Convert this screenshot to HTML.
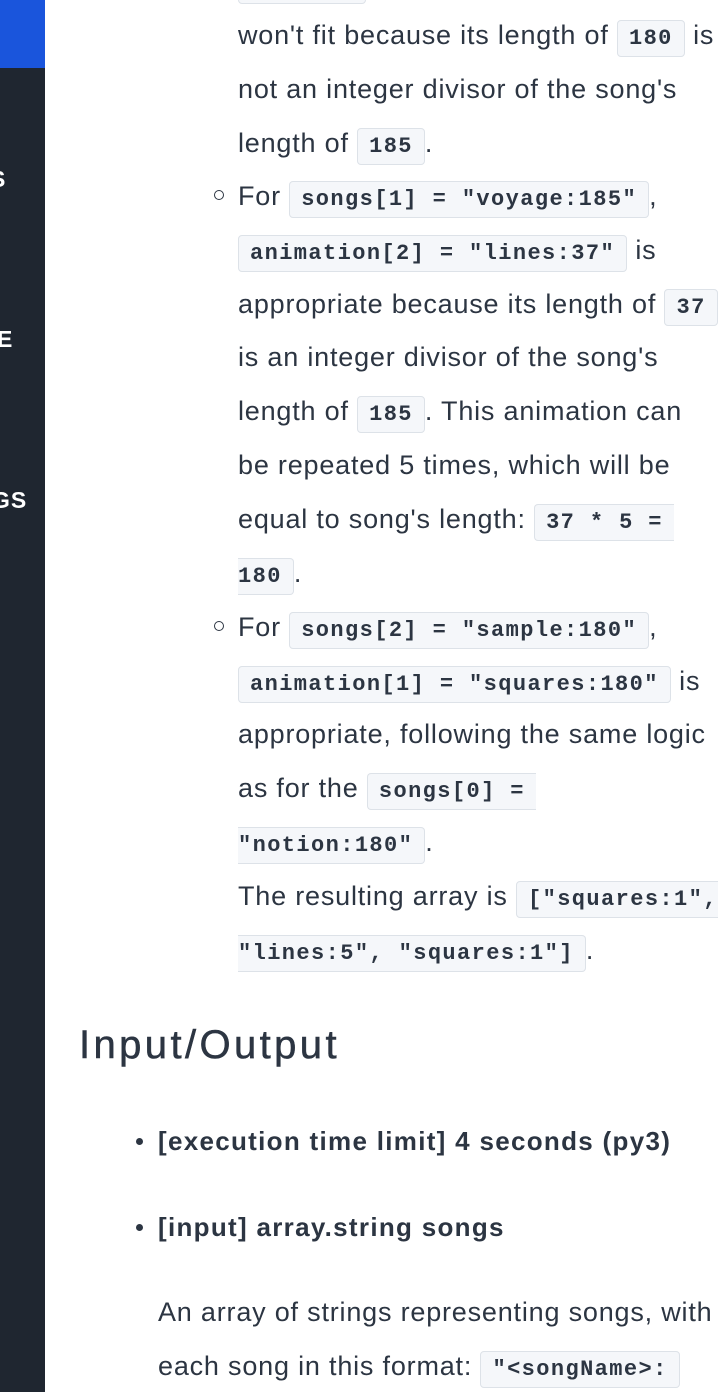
<!DOCTYPE html>
<html><head><meta charset="utf-8"><style>
body{margin:0;width:718px;height:1392px;overflow:hidden;background:#fff;position:relative;font-family:"Liberation Sans",sans-serif;color:#2c3542}
.sb{position:absolute;left:0;top:0;width:45px;height:1392px;background:#1f2630}
.sb .blue{position:absolute;left:0;top:0;width:45px;height:68px;background:#1a55dc}
.sb span{position:absolute;color:#fff;font:700 23px "Liberation Sans",sans-serif;letter-spacing:1px}
.l{position:absolute;left:238px;height:54px;line-height:54px;font-size:27px;letter-spacing:0.8px;white-space:nowrap}
code{font:700 22px "Liberation Mono",monospace;background:#f5f7fa;border:1px solid #dde2e8;border-radius:4px;padding:5px 11px;color:#2c3542;letter-spacing:1.4px}
.b{position:absolute;left:214px;width:8px;height:8px;border:1.5px solid #2c3542;border-radius:50%}
h2{position:absolute;left:79px;top:1018px;margin:0;font-weight:400;font-size:40px;letter-spacing:3.4px;line-height:54px;-webkit-text-stroke:0.5px #2c3542}
.bl{position:absolute;left:158px;font-size:26px;font-weight:700;line-height:54px;letter-spacing:1.3px;white-space:nowrap}
.d{position:absolute;left:136px;width:7px;height:7px;border-radius:50%;background:#2c3542}
</style></head><body>
<div class="sb"><div class="blue"></div>
<span style="left:-10px;top:166px">S</span>
<span style="left:-3px;top:326px">E</span>
<span style="left:-8px;top:487px">GS</span></div>

<div style="position:absolute;left:238px;top:-10px;width:126px;height:12px;border:1px solid #dde2e8;border-radius:4px;background:#f5f7fa"></div>
<div class="l" style="top:8px">won't fit because its length of <code>180</code> is</div>
<div class="l" style="top:62px">not an integer divisor of the song's</div>
<div class="l" style="top:116px">length of <code>185</code>.</div>
<div class="b" style="top:190px"></div>
<div class="l" style="top:169px">For <code>songs[1] = "voyage:185"</code>,</div>
<div class="l" style="top:223px"><code>animation[2] = "lines:37"</code> is</div>
<div class="l" style="top:277px">appropriate because its length of <code>37</code></div>
<div class="l" style="top:330px">is an integer divisor of the song's</div>
<div class="l" style="top:384px">length of <code>185</code>. This animation can</div>
<div class="l" style="top:438px">be repeated 5 times, which will be</div>
<div class="l" style="top:492px">equal to song's length: <code style="border-right:none;border-radius:4px 0 0 4px">37 * 5 =</code></div>
<div class="l" style="top:546px"><code style="border-left:none;border-radius:0 4px 4px 0;padding-left:0">180</code>.</div>
<div class="b" style="top:621px"></div>
<div class="l" style="top:600px">For <code>songs[2] = "sample:180"</code>,</div>
<div class="l" style="top:654px"><code>animation[1] = "squares:180"</code> is</div>
<div class="l" style="top:707px">appropriate, following the same logic</div>
<div class="l" style="top:761px">as for the <code style="border-right:none;border-radius:4px 0 0 4px">songs[0] =</code></div>
<div class="l" style="top:815px"><code style="border-left:none;border-radius:0 4px 4px 0;padding-left:0">"notion:180"</code>.</div>
<div class="l" style="top:869px">The resulting array is <code>["squares:1",</code></div>
<div class="l" style="top:923px"><code style="border-left:none;border-radius:0 4px 4px 0;padding-left:0">"lines:5", "squares:1"]</code>.</div>

<h2>Input/Output</h2>
<div class="d" style="top:1138px"></div>
<div class="bl" style="top:1114px">[execution time limit] 4 seconds (py3)</div>
<div class="d" style="top:1224px"></div>
<div class="bl" style="top:1200px">[input] array.string songs</div>
<div class="l" style="left:158px;top:1285px">An array of strings representing songs, with</div>
<div class="l" style="left:158px;top:1339px">each song in this format: <code>"&lt;songName&gt;:</code></div>
</body></html>
